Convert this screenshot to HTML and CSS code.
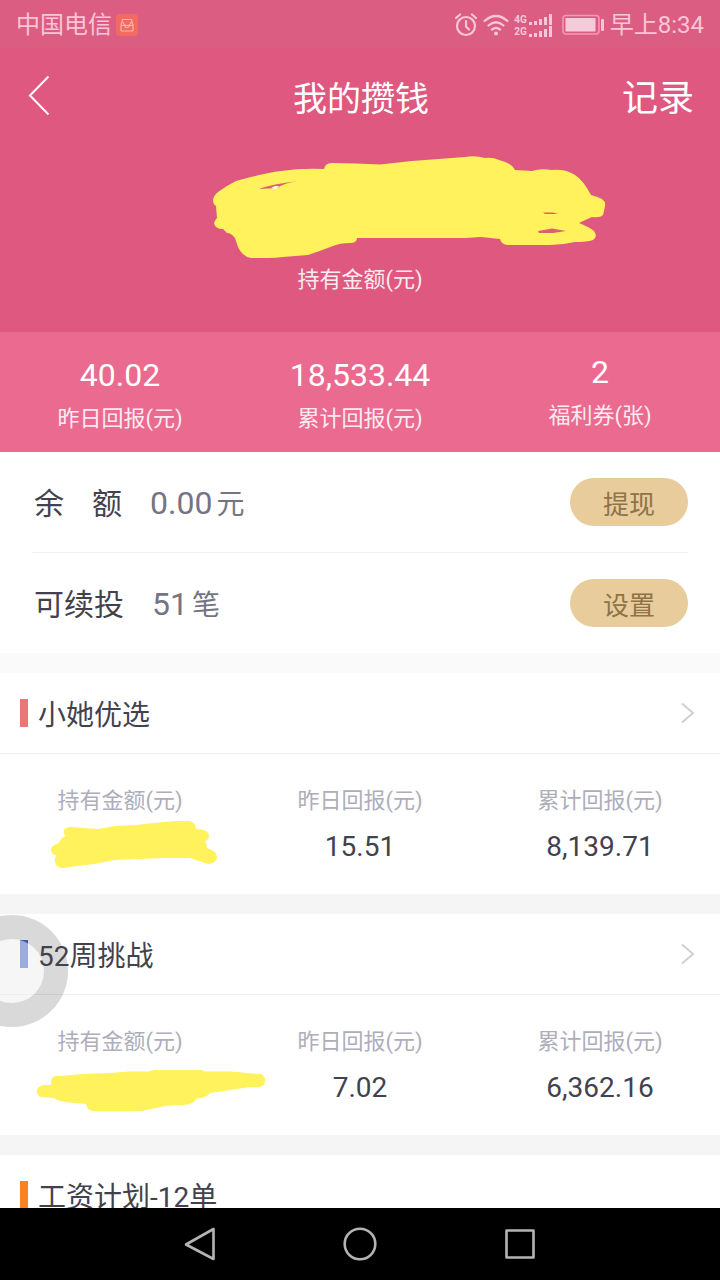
FILE: index.html
```html
<!DOCTYPE html>
<html lang="zh-CN">
<head>
<meta charset="utf-8">
<meta name="viewport" content="width=device-width, initial-scale=1">
<title>我的攒钱</title>
<link rel="stylesheet" href="styles.css">
</head>
<body>
<div class="screen">
  <div class="status">
    <span class="status-text">中国电信</span>
    <svg class="app-badge" width="22" height="22" viewBox="0 0 22 22" fill="none" stroke="#fcb3a8" stroke-width="1.2" stroke-linejoin="round">
      <rect width="22" height="22" rx="4" fill="#f36a62" stroke="none"/>
      <path d="M6.500 5.500h9l1.500 6v4.500q0 1-1 1h-10q-1 0-1-1v-4.500zM5 11.500h3.500q.5 2 2.500 2t2.500-2h3.500M7 8q.5 3.500 4 3.500t4-3.500"/>
    </svg>
    <div class="status-icons">
      <svg width="24" height="24" viewBox="0 0 24 24" fill="none" stroke="#f8c6d8" stroke-width="2.200" stroke-linecap="round">
        <circle cx="12" cy="13" r="9"/><path d="M12 8v5.500l3 3M2 5l4-3.500M18 1.500l4 3.500"/>
      </svg>
      <svg width="28" height="24" viewBox="0 0 28 24" fill="none" stroke="#f8c6d8" stroke-width="2.200" stroke-linecap="round">
        <path d="M2.500 8q11.500-10 23 0M6.500 12.500q7.500-6.500 15 0M10 16.500q4-3 8 0"/><circle cx="14" cy="20.500" r="1.400" fill="#f8c6d8" stroke-width="1.200"/>
      </svg>
      <div class="signals">
        <div class="signal"><span>4G</span>
          <svg width="24" height="11" viewBox="0 0 24 11" fill="#f8c6d8"><path d="M0 8h3v3h-3zM5 7h3v4h-3zM10 5h3v6h-3zM15 3h3v8h-3zM20 0h3v11h-3z"/></svg>
        </div>
        <div class="signal"><span>2G</span>
          <svg width="24" height="11" viewBox="0 0 24 11" fill="#f8c6d8"><path d="M0 8h3v3h-3zM5 7h3v4h-3zM10 5h3v6h-3zM15 3h3v8h-3zM20 0h3v11h-3z"/></svg>
        </div>
      </div>
      <svg width="42" height="22" viewBox="0 0 42 22">
        <rect x="1" y="1.500" width="36" height="18.500" rx="3" fill="none" stroke="#f09cb8" stroke-width="1.500"/>
        <rect x="3.500" y="4" width="30" height="13.500" fill="#f5cbdb"/>
        <rect x="39" y="5" width="3" height="12" rx="1" fill="#f8c6d8"/>
      </svg>
    </div>
    <span class="status-text">早上8:34</span>
  </div>

  <main class="content">
    <header class="topbar">
      <button class="back" aria-label="返回">
        <svg width="22" height="42" viewBox="0 0 22 42" fill="none" stroke="#fff" stroke-width="2"><path d="M20.500 1.500L2 20.500L20.500 39.500"/></svg>
      </button>
      <h1 class="title">我的攒钱</h1>
      <a class="record" href="#">记录</a>
    </header>

    <section class="hero">
      <div class="hero-amount">
        <svg class="hero-mark" width="394" height="104" viewBox="213 156 394 104" aria-hidden="true">
          <path fill="#fff25c" d="M213 200Q214 195 218 192Q226 186 236 181Q264 173 281 171Q301 168 324 169Q325 163 332 163Q355 163 380 164.500L412 161L465 157Q475 155 485 158Q493 157 499 160Q512 163 515 170L532 171Q540 168 552 170Q566 169 575 175Q583 180 591 195Q598 197 602 199Q606 202 605 206Q604 211 603 215Q600 218 592 217Q585 220 579 223Q591 228 594 231Q598 237 593 240Q587 242 575 242Q562 245 550 245H507Q501 244 500 239L481 237L465 238H357Q357 243 350 243Q340 243 333 246Q320 251 308 255L283 257Q275 258 268 258H251Q243 257 238 247L235 238Q231 233 227 233L223 229Q215 229 214 223Q215 220 217 218L216 206Q213 204 213 200Z"/>
          <path fill="#d96070" d="M259 189Q272 184 298 181Q284 183 277 188ZM543 212.500H553L558 214H545ZM538 231L552 228.500L566 231L553 233H539Z"/>
          <path fill="#fff" d="M271 188l4-2h4l-3 3z"/>
        </svg>
      </div>
      <p class="label">持有金额(元)</p>
    </section>

    <section class="stats">
      <div class="stat"><strong class="stat-value">40.02</strong><span class="label">昨日回报(元)</span></div>
      <div class="stat"><strong class="stat-value">18,533.44</strong><span class="label">累计回报(元)</span></div>
      <div class="stat stat-raised"><strong class="stat-value">2</strong><span class="label">福利券(张)</span></div>
    </section>

    <section class="account">
      <div class="row">
        <span class="row-label"><span>余</span><span>额</span></span>
        <span class="row-value">0.00</span><span class="unit">元</span>
        <button class="pill">提现</button>
      </div>
      <div class="row">
        <span class="row-label">可续投</span>
        <span class="row-value">51</span><span class="unit">笔</span>
        <button class="pill">设置</button>
      </div>
    </section>

    <section class="plan plan-first">
      <h2 class="plan-title red"><span class="plan-name">小她优选</span>
        <svg class="chevron" width="14" height="22" viewBox="0 0 14 22" fill="none" stroke="#cfcfd5" stroke-width="2"><path d="M1 1.500L12 11L1 20.500"/></svg>
      </h2>
      <div class="figures">
        <div class="figure"><span class="label">持有金额(元)</span>
          <span class="figure-value">
            <svg class="mark mark-a" width="168" height="48" viewBox="50 820 168 48" aria-hidden="true"><path fill="#fff25c" d="M64 830Q66 827 71 827L98 829L115 826L135 825L175 821H190Q196 823 196 829Q208 829 209 835Q209 840 205 841Q207 845 207 848Q217 851 217 857Q216 864 208 864L199 861L190 858H163L140 859L115 860L94 864L62 868Q55 867 55 861Q54 858 57 856Q50 854 51 849Q52 845 59 843Q60 838 66 836Q63 834 64 830Z"/></svg>
          </span>
        </div>
        <div class="figure"><span class="label">昨日回报(元)</span><span class="figure-value">15.51</span></div>
        <div class="figure"><span class="label">累计回报(元)</span><span class="figure-value">8,139.71</span></div>
      </div>
    </section>

    <section class="plan">
      <h2 class="plan-title blue"><span class="plan-name">52周挑战</span>
        <svg class="chevron" width="14" height="22" viewBox="0 0 14 22" fill="none" stroke="#cfcfd5" stroke-width="2"><path d="M1 1.500L12 11L1 20.500"/></svg>
        <span class="assist" aria-hidden="true"></span>
      </h2>
      <div class="figures">
        <div class="figure"><span class="label">持有金额(元)</span>
          <span class="figure-value">
            <svg class="mark mark-b" width="230" height="42" viewBox="36 1070 230 42" aria-hidden="true"><path fill="#fff25c" d="M51 1081Q52 1075 59 1076L84 1074L110 1073L128 1071.500H148L155 1070H202L205 1071.500H232L247 1073L261 1074Q266 1077 265 1082Q264 1087 258 1087H250L230 1090L210 1093Q208 1097 196 1099Q194 1105 180 1105L165 1106L142 1111H93Q87 1110 86 1104L65 1102L57 1100L54 1098L41 1097Q36 1095 37 1090Q39 1085 45 1085H51Z"/></svg>
          </span>
        </div>
        <div class="figure"><span class="label">昨日回报(元)</span><span class="figure-value">7.02</span></div>
        <div class="figure"><span class="label">累计回报(元)</span><span class="figure-value">6,362.16</span></div>
      </div>
    </section>

    <section class="plan">
      <h2 class="plan-title orange"><span class="plan-name">工资计划-12单</span></h2>
    </section>
  </main>

  <nav class="navbar">
    <button aria-label="返回"><svg width="36" height="36" viewBox="0 0 36 36" fill="none" stroke="#b4b4b4" stroke-width="2.600" stroke-linejoin="round"><path d="M31.500 3V33L4 18.500z"/></svg></button>
    <button aria-label="主页"><svg width="36" height="36" viewBox="0 0 36 36" fill="none" stroke="#b4b4b4" stroke-width="2.600"><circle cx="18" cy="18" r="15.300"/></svg></button>
    <button aria-label="最近任务"><svg width="36" height="36" viewBox="0 0 36 36" fill="none" stroke="#b4b4b4" stroke-width="2.600" stroke-linejoin="round"><rect x="4.500" y="4.500" width="27" height="27"/></svg></button>
  </nav>
</div>
</body>
</html>
```

FILE: styles.css
```css
* { box-sizing: border-box; }

body, h1, h2, p { margin: 0; }

body {
  font-family: Roboto, "Noto Sans CJK SC", sans-serif;
  color: #42424e;
  background: #fff;
}

h1, h2, strong { font-weight: 400; }

svg { display: block; flex: none; }

button {
  font: inherit;
  padding: 0;
  border: 0;
  background: none;
}

.screen {
  display: flex;
  flex-direction: column;
  height: 100vh;
}

/* System status bar */
.status {
  display: flex;
  align-items: center;
  flex: none;
  height: 48px;
  padding: 2px 16px 0;
  background: #db5d82;
  color: #f8c6d8;
}

.status-text { font-size: 24px; line-height: 32px; }
.app-badge { margin-left: 4px; }

.status-icons {
  display: flex;
  align-items: center;
  gap: 4px;
  margin: 0 6px 0 auto;
}

.signals {
  display: grid;
  gap: 1px;
  margin-right: 5px;
}

.signal {
  display: flex;
  align-items: center;
  gap: 2px;
  font: bold 10px/11px Roboto, sans-serif;
}

/* Page content */
.content {
  flex: 1;
  min-height: 0;
  overflow: hidden;
}

.topbar {
  display: grid;
  grid-template-columns: 1fr auto 1fr;
  align-items: center;
  height: 96px;
  padding: 0 26px 0 28px;
  background: #df5880;
  color: #fff;
}

.back { justify-self: start; }

.title, .record {
  padding-top: 6px;
  line-height: 48px;
}

.title { font-size: 34px; }

.record {
  justify-self: end;
  font-size: 36px;
  color: inherit;
  text-decoration: none;
}

.hero {
  padding: 12px 0 36px;
  background: #df5880;
  color: #fff;
  text-align: center;
}

.hero-amount {
  display: flex;
  justify-content: center;
  height: 108px;
  padding-left: 100px;
}

.label {
  font-size: 22px;
  line-height: 32px;
}

.hero .label, .stats .label { color: #fdeaf1; }

.stats {
  display: grid;
  grid-template-columns: repeat(3, 1fr);
  height: 120px;
  padding-top: 23px;
  background: #ea6a90;
  color: #fff;
}

.stat {
  display: flex;
  flex-direction: column;
  align-items: center;
  gap: 8px;
}

.stat-raised { margin-top: -3px; }

.stat-value {
  font-size: 32px;
  line-height: 40px;
}

/* Balance and renewals */
.account {
  padding: 0 32px;
  background: #fff;
}

.row {
  display: flex;
  align-items: center;
  height: 100px;
  padding-left: 2px;
}

.row + .row {
  height: 101px;
  border-top: 1px solid #f2f2f4;
}

.row-label {
  display: flex;
  gap: 28px;
  margin-right: 28px;
  padding-top: 4px;
  font-size: 30px;
  line-height: 40px;
}

.row-value {
  padding-top: 2px;
  font-size: 32px;
  line-height: 40px;
  color: #747482;
}

.unit {
  margin-left: 4px;
  padding-top: 6px;
  font-size: 28px;
  line-height: 40px;
  color: #747482;
}

.pill {
  width: 118px;
  height: 48px;
  margin-left: auto;
  border-radius: 24px;
  background: #e8cc9c;
  color: #8f7348;
  font-size: 26px;
}

/* Savings plans */
.plan { border-top: 20px solid #f5f5f5; }
.plan-first { border-color: #fafafa; }

.plan-title {
  position: relative;
  display: flex;
  align-items: center;
  height: 81px;
  padding: 0 25px 0 20px;
  border-bottom: 1px solid #efeff1;
  font-size: 28px;
  line-height: 40px;
}

.plan-title::before {
  content: "";
  width: 8px;
  height: 28px;
  margin-right: 10px;
}

.plan-name {
  padding-top: 6px;
  z-index: 2;
}

.red::before { background: #ea7676; }
.blue::before { background: #466ac8; }
.orange::before { background: #fa8220; }

.chevron { margin-left: auto; }

.figures {
  display: grid;
  grid-template-columns: repeat(3, 1fr);
  height: 140px;
  padding-top: 31px;
}

.figure {
  display: flex;
  flex-direction: column;
  align-items: center;
  gap: 10px;
}

.figure .label { color: #aeaeba; }

.figure-value {
  position: relative;
  min-height: 40px;
  font-size: 28px;
  line-height: 40px;
}

/* Pen strokes drawn over the hidden amounts */
.mark { position: absolute; }
.mark-a { top: -7px; left: -70px; }
.mark-b { top: 2px; left: -84px; }

/* Floating assistive button */
.assist {
  position: absolute;
  z-index: 1;
  top: 1px;
  left: -44px;
  width: 112px;
  height: 112px;
  border: 24px solid rgba(0, 0, 0, 0.15);
  border-radius: 50%;
  background: rgba(237, 237, 237, 0.5);
  background-clip: padding-box;
}

/* System navigation bar */
.navbar {
  display: flex;
  justify-content: center;
  align-items: center;
  gap: 124px;
  flex: none;
  height: 72px;
  background: #000;
}
```
